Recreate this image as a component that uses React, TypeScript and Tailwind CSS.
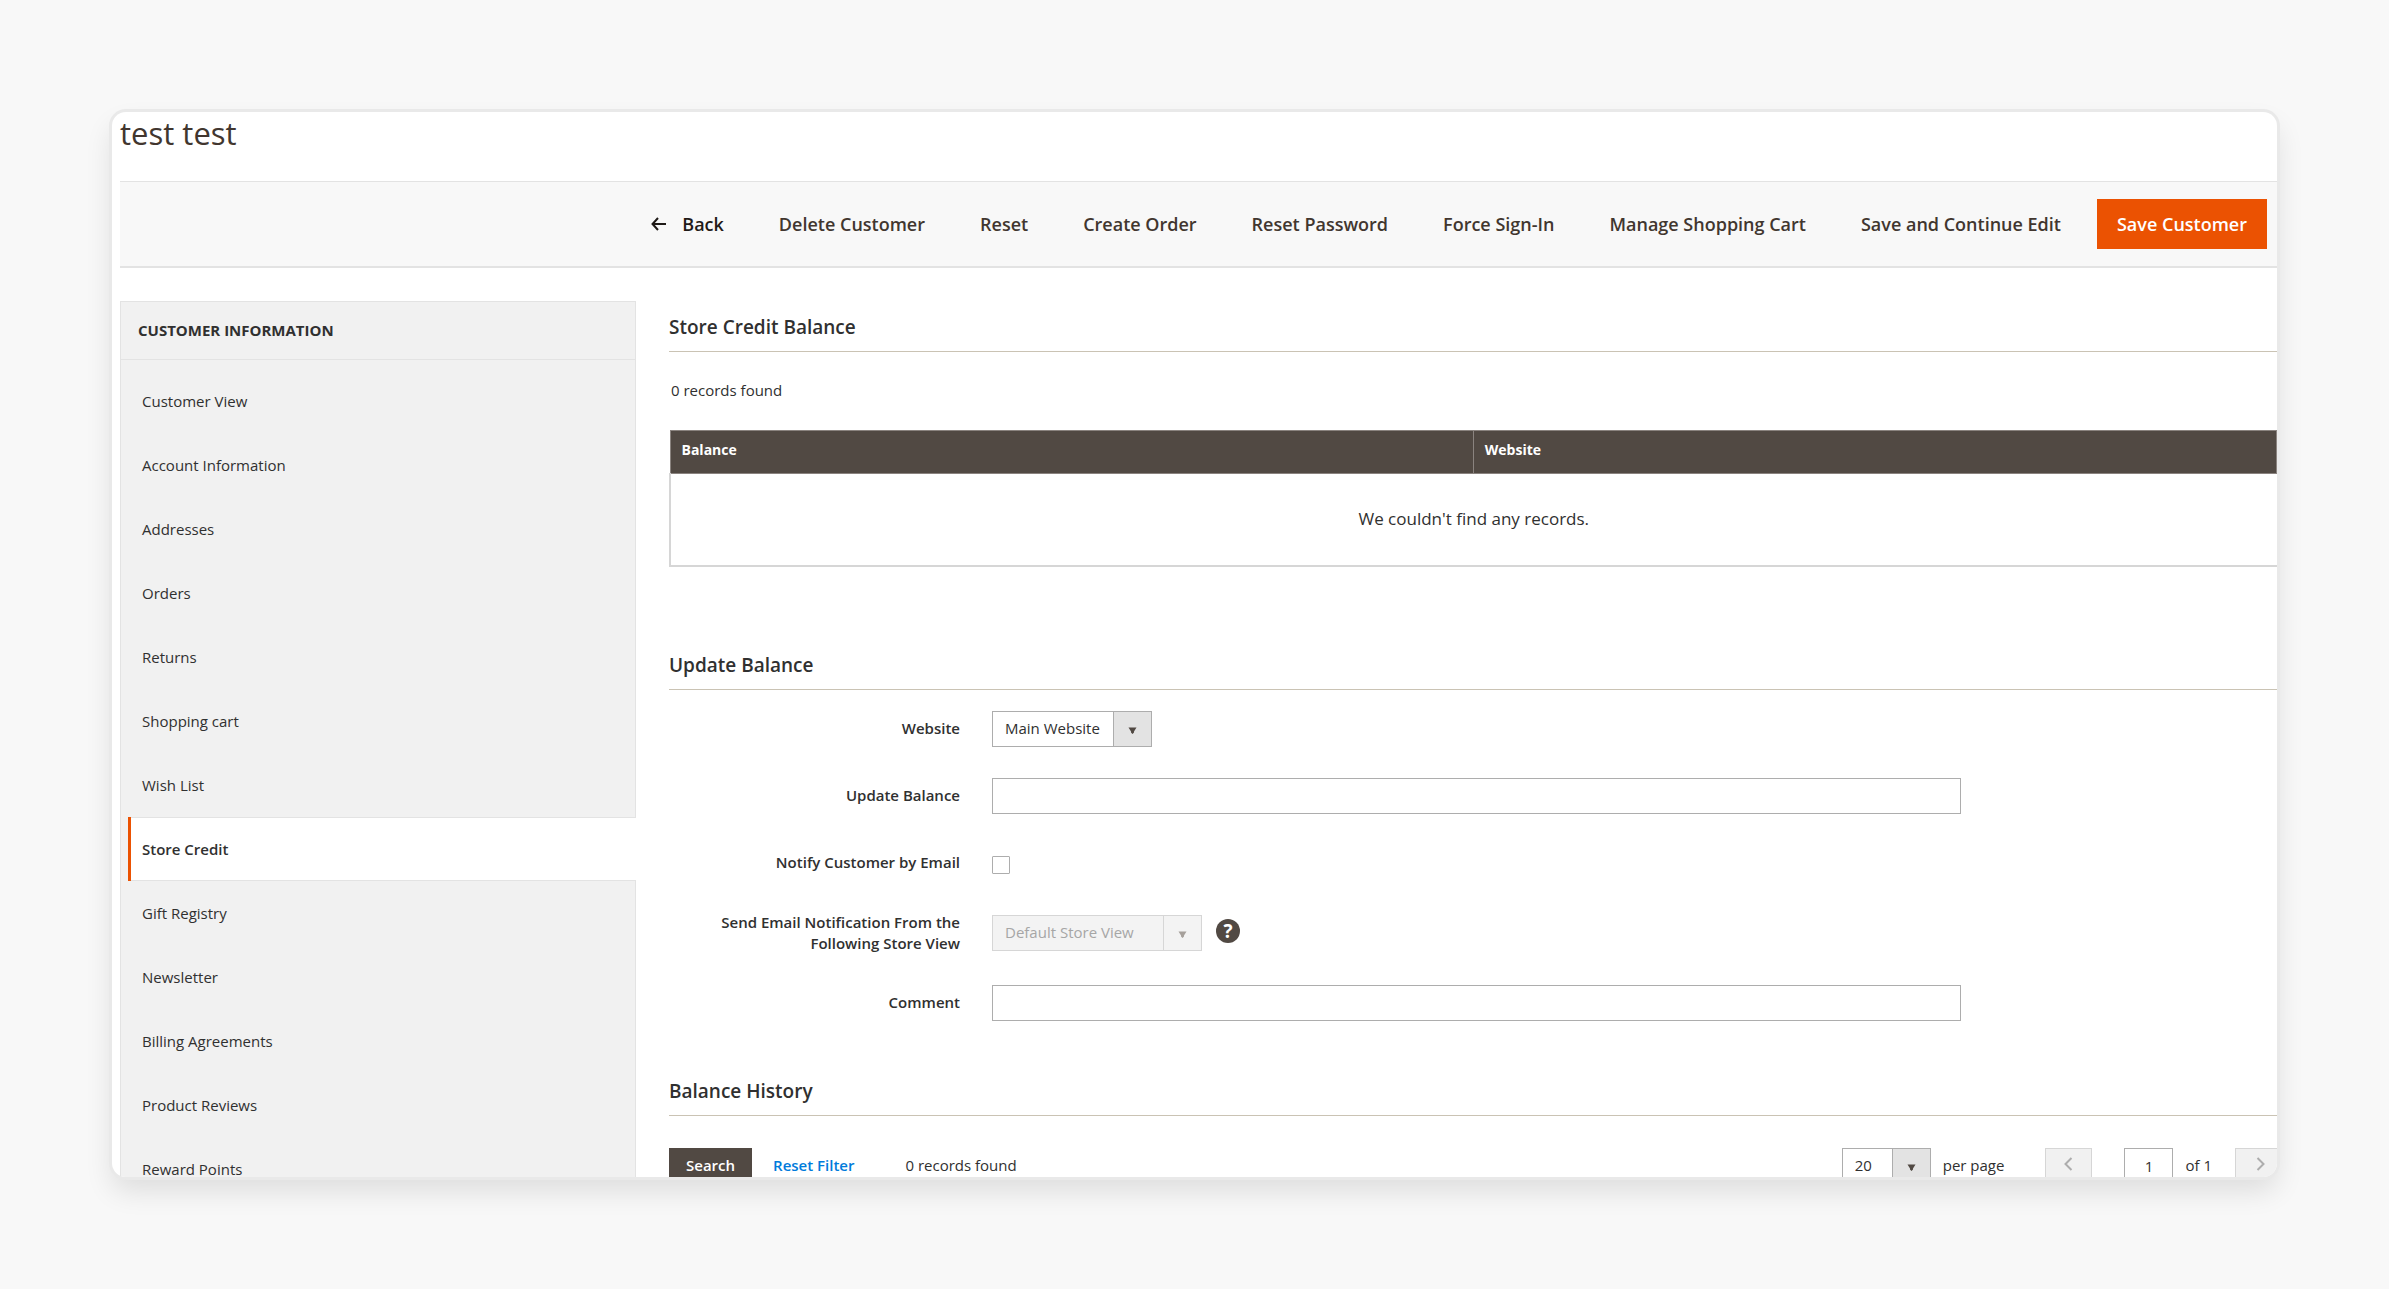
import React from 'react';
import type { ReactNode } from 'react';

const menuItems = [
  'Customer View',
  'Account Information',
  'Addresses',
  'Orders',
  'Returns',
  'Shopping cart',
  'Wish List',
  'Store Credit',
  'Gift Registry',
  'Newsletter',
  'Billing Agreements',
  'Product Reviews',
  'Reward Points'
];

const actions = [
  'Delete Customer',
  'Reset',
  'Create Order',
  'Reset Password',
  'Force Sign-In',
  'Manage Shopping Cart',
  'Save and Continue Edit'
];

function SelectArrow({ className }: { className: string }) {
  return (
    <span className={`pointer-events-none absolute inset-y-px right-px flex w-[38px] items-center justify-center border-l ${className}`}>
      <svg className="mt-1 h-[7px] w-[9px]" viewBox="0 0 9 7" fill="currentColor" aria-hidden="true">
        <path d="M0.5 0.5h8L6 4.5v1L4.5 7 3 5.5v-1z" />
      </svg>
    </span>
  );
}

function Chevron({ d }: { d: string }) {
  return (
    <svg className="-mt-1 h-[14px] w-[9px]" viewBox="0 0 9 14" fill="none" stroke="currentColor" strokeWidth="2" aria-hidden="true">
      <path d={d} />
    </svg>
  );
}

function SectionTitle({ children }: { children: ReactNode }) {
  return (
    <h2 className="h-[51px] border-b border-[#cac3b4] pt-[14px] text-[19px] leading-6 font-semibold">{children}</h2>
  );
}

function Field({ id, label, children }: { id: string; label: string; children: ReactNode }) {
  return (
    <>
      <label htmlFor={id} className="text-right leading-[21px] font-semibold">{label}</label>
      <div className="flex min-h-9 items-center">{children}</div>
    </>
  );
}

export default function App() {
  return (
    <div className="flex h-screen flex-col bg-[#f8f8f8] p-28 font-['Open_Sans',sans-serif] text-[15px] text-[#303030]">
      <div className="min-h-0 flex-1 overflow-hidden rounded-[14px] bg-white pl-2 shadow-[0_0_0_3px_#e9e9e9,0_14px_28px_rgba(0,0,0,0.11)]">
        <h1 className="h-[69px] pt-[3px] text-[31px] leading-9 text-[#41362f]">test test</h1>

        {/* Page actions */}
        <div className="flex h-[87px] items-center justify-end border-t border-b-2 border-[#e3e3e3] bg-[#f8f8f8] pr-[10px] text-lg font-semibold text-[#41362f]">
          <button className="flex items-center gap-4 text-[#1f1a17]">
            <svg className="h-[14px] w-[15px]" viewBox="0 0 15 14" fill="none" stroke="currentColor" strokeWidth="2" aria-hidden="true">
              <path d="M7 1L1.5 7L7 13M1.5 7H15" />
            </svg>
            Back
          </button>
          {actions.map((action) => (
            <button key={action} className="ml-[55px]">{action}</button>
          ))}
          <button className="ml-9 h-[50px] bg-[#eb5202] px-5 text-white">Save Customer</button>
        </div>

        <div className="flex gap-[33px] pt-[33px]">
          {/* Customer tabs */}
          <aside className="w-[516px] shrink-0">
            <div className="border border-[#e3e3e3] bg-[#f1f1f1] px-[17px] py-4">
              <h2 className="leading-[25px] font-bold">CUSTOMER INFORMATION</h2>
            </div>
            <nav className="pb-8">
              <div className="h-[9px] border-x border-[#e3e3e3] bg-[#f1f1f1]" />
              {menuItems.map((item) =>
                item === 'Store Credit' ? (
                  <div key={item} className="border-l border-[#e3e3e3] bg-[#f1f1f1] pl-[7px]">
                    <a href="#" className="flex h-16 items-center border-y border-[#e3e3e3] bg-white font-semibold">
                      <span className="-my-px h-16 w-[3px] bg-[#eb5202]" />
                      <span className="ml-[11px]">{item}</span>
                    </a>
                  </div>
                ) : (
                  <a key={item} href="#" className="flex h-16 items-center border-x border-[#e3e3e3] bg-[#f1f1f1] pl-[21px]">
                    {item}
                  </a>
                )
              )}
            </nav>
          </aside>

          <main className="min-w-0 flex-1">
            {/* Store credit balance */}
            <SectionTitle>Store Credit Balance</SectionTitle>
            <p className="pt-[26px] pb-7 pl-0.5 leading-6">0 records found</p>
            <table className="w-full border-collapse">
              <thead>
                <tr className="h-[43px] border border-[#8a837f] bg-[#514943] text-left text-sm text-white">
                  <th className="w-1/2 px-[11px] pb-1 font-bold">Balance</th>
                  <th className="w-1/2 border-l border-[#8a837f] px-[11px] pb-1 font-bold">Website</th>
                </tr>
              </thead>
              <tbody>
                <tr className="h-[92px] border-b-2 border-l-2 border-[#d6d6d6]">
                  <td colSpan={2} className="pb-0.5 text-center text-[17px]">We couldn't find any records.</td>
                </tr>
              </tbody>
            </table>

            {/* Update balance */}
            <div className="mt-[72px]">
              <SectionTitle>Update Balance</SectionTitle>
              <form className="grid grid-cols-[291px_1fr] items-center gap-x-8 gap-y-[31px] pt-[21px] pr-[316px]">
                <Field id="website" label="Website">
                  <span className="relative">
                    <select id="website" className="block h-9 w-40 appearance-none border border-[#adadad] bg-white pl-3">
                      <option>Main Website</option>
                    </select>
                    <SelectArrow className="border-[#adadad] bg-[#e3e3e3] text-[#514943]" />
                  </span>
                </Field>
                <Field id="amount" label="Update Balance">
                  <input id="amount" type="text" className="h-9 w-full border border-[#adadad] px-3" />
                </Field>
                <Field id="notify" label="Notify Customer by Email">
                  <input id="notify" type="checkbox" className="mt-1 h-[18px] w-[18px] appearance-none rounded-[1px] border border-[#adadad]" />
                </Field>
                <Field id="store" label="Send Email Notification From the Following Store View">
                  <span className="relative">
                    <select id="store" disabled className="block h-9 w-[210px] appearance-none border border-[#d6d6d6] bg-[#f3f3f3] pl-3 text-[#a6a6a6] opacity-100">
                      <option>Default Store View</option>
                    </select>
                    <SelectArrow className="border-[#d6d6d6] text-[#a6a09b]" />
                  </span>
                  <span className="mb-1 ml-[14px] flex h-6 w-6 items-center justify-center rounded-full bg-[#514943] text-[19px] leading-6 font-bold text-white">?</span>
                </Field>
                <Field id="comment" label="Comment">
                  <input id="comment" type="text" className="h-9 w-full border border-[#adadad] px-3" />
                </Field>
              </form>
            </div>

            {/* Balance history */}
            <div className="mt-11">
              <SectionTitle>Balance History</SectionTitle>
              <div className="-mr-2 flex h-[68px] items-center pt-8">
                <button className="h-9 bg-[#514943] px-[17px] font-semibold text-white">Search</button>
                <button className="ml-[21px] font-semibold text-[#007bdb]">Reset Filter</button>
                <span className="ml-[51px]">0 records found</span>
                <span className="relative ml-auto">
                  <select id="limit" className="block h-9 w-[89px] appearance-none border border-[#adadad] bg-white pl-3">
                    <option>20</option>
                  </select>
                  <SelectArrow className="border-[#adadad] bg-[#e3e3e3] text-[#514943]" />
                </span>
                <label htmlFor="limit" className="ml-3">per page</label>
                <button aria-label="Previous page" disabled className="ml-[41px] flex h-9 w-[47px] items-center justify-center border border-[#d6d6d6] bg-[#f1f1f1] text-[#adadad]">
                  <Chevron d="M7.5 1L1.5 7L7.5 13" />
                </button>
                <input id="page" type="text" defaultValue="1" className="ml-8 h-9 w-[49px] border border-[#adadad] text-center" />
                <label htmlFor="page" className="ml-3">of 1</label>
                <button aria-label="Next page" disabled className="ml-[23px] flex h-9 w-[50px] items-center justify-center border border-[#d6d6d6] bg-[#f1f1f1] text-[#adadad]">
                  <Chevron d="M1.5 1L7.5 7L1.5 13" />
                </button>
              </div>
            </div>
          </main>
        </div>
      </div>
    </div>
  );
}
